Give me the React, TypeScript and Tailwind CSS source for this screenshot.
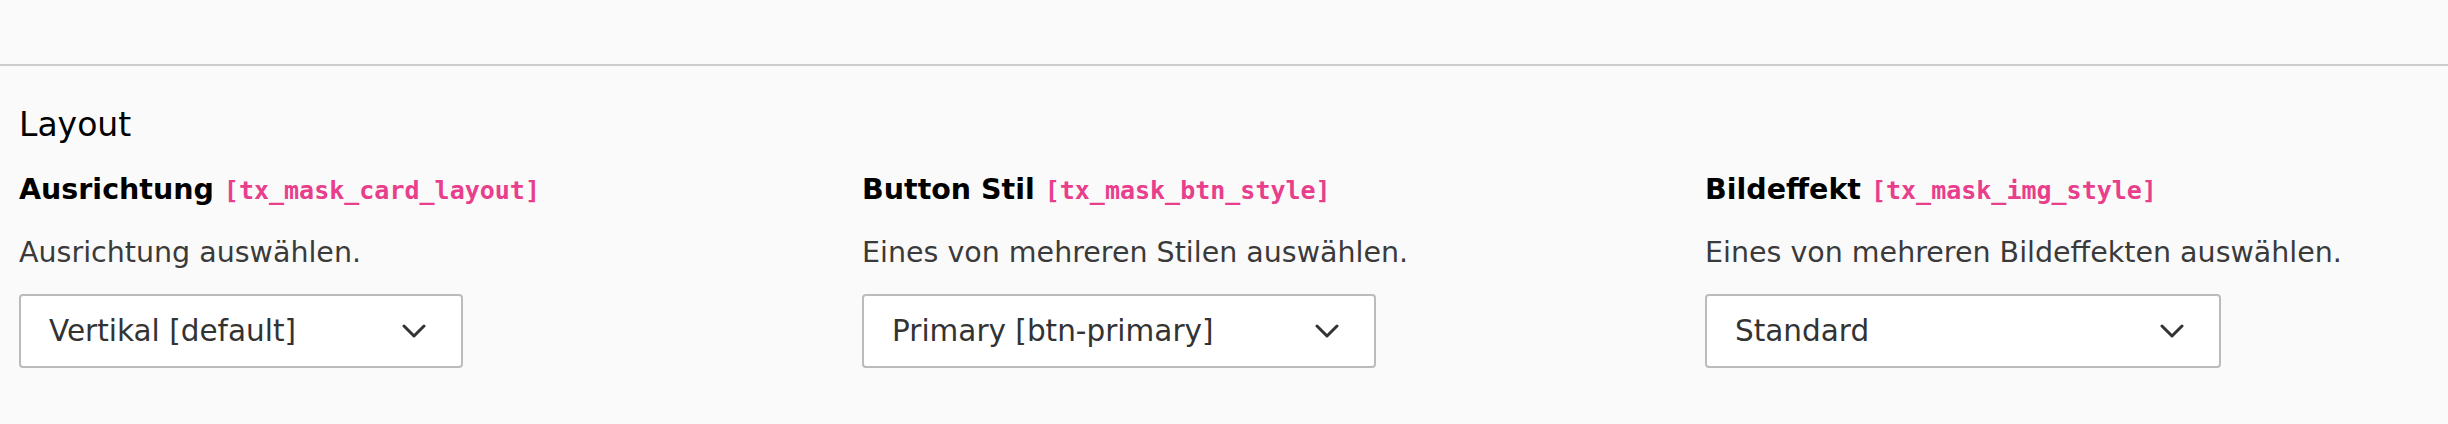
import React from 'react';

const fields = [
  {
    label: "Ausrichtung",
    key: "[tx_mask_card_layout]",
    help: "Ausrichtung auswählen.",
    value: "Vertikal [default]",
    width: "w-[444px]",
  },
  {
    label: "Button Stil",
    key: "[tx_mask_btn_style]",
    help: "Eines von mehreren Stilen auswählen.",
    value: "Primary [btn-primary]",
    width: "w-[514px]",
  },
  {
    label: "Bildeffekt",
    key: "[tx_mask_img_style]",
    help: "Eines von mehreren Bildeffekten auswählen.",
    value: "Standard",
    width: "w-[516px]",
  },
];

const Chevron = () => (
  <svg width="24" height="14" viewBox="0 0 24 14" fill="none">
    <polyline points="2,2 12,12 22,2" stroke="#333333" strokeWidth="3" strokeLinecap="round" strokeLinejoin="round" />
  </svg>
);

const App = () => {
  return (
    <div className="min-h-[424px] w-full bg-[#fafafa] font-['DejaVu_Sans',Verdana,sans-serif]">
      {/* previous section ends with a rule */}
      <div className="h-[66px] border-b-2 border-[#cccccc]"></div>

      <section className="pl-[19px] pt-[39px]">
        <h2 className="text-[33px] leading-[40px] text-black">Layout</h2>

        <div className="grid grid-cols-[843px_843px_1fr] mt-[25px]">
          {fields.map((f) => (
            <div key={f.key}>
              <label className="block text-[28.5px] leading-[40px] font-bold text-black">
                {f.label}{' '}
                <code className="font-['DejaVu_Sans_Mono',monospace] text-[25px] text-[#e83e8c]">{f.key}</code>
              </label>
              <p className="mt-[22px] text-[28.5px] leading-[40px] text-[#3a3a3a]">{f.help}</p>
              <div
                className={`mt-[21px] h-[74px] ${f.width} flex items-center justify-between bg-white border-2 border-[#bbbbbb] rounded-[4px] pl-[28px] pr-[35px]`}
              >
                <span className="text-[29.5px] text-[#333333]">{f.value}</span>
                <Chevron />
              </div>
            </div>
          ))}
        </div>
      </section>
    </div>
  );
};

export default App;
